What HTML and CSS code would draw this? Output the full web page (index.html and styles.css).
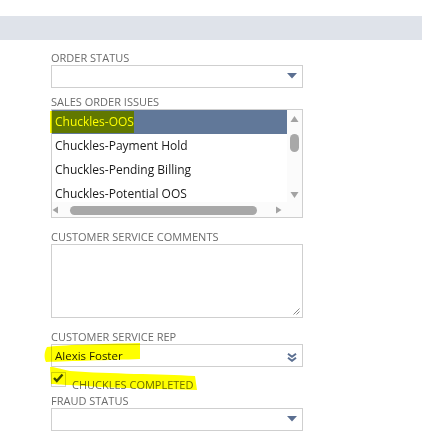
FILE: index.html
```html
<!doctype html>
<html lang="en">
  <head>
    <meta charset="UTF-8" />
    <meta name="viewport" content="width=device-width, initial-scale=1.0" />
    <title>Sales Order - Custom Fields</title>
    <link rel="stylesheet" href="styles.css">
  </head>
  <body>
    <div class="band"></div>

    <div class="form">
      <div class="field first">
        <div class="label">ORDER STATUS</div>
        <div class="select">
          <span class="value"></span>
          <svg class="arrow" width="10" height="6" viewBox="0 0 10 6">
            <path d="M0 0 L10 0 L5 5.5 Z" />
          </svg>
        </div>
      </div>

      <div class="field">
        <div class="label">SALES ORDER ISSUES</div>
        <div class="listbox">
          <div class="list-main">
            <div class="list-items">
              <div class="item selected">Chuckles-OOS</div>
              <div class="item">Chuckles-Payment Hold</div>
              <div class="item">Chuckles-Pending Billing</div>
              <div class="item">Chuckles-Potential OOS</div>
            </div>
            <!-- vertical scrollbar -->
            <svg class="vscroll" width="15" height="92" viewBox="0 0 15 92">
              <rect width="15" height="92" fill="#fbfbfb" />
              <path d="M3.5 12 L11.5 12 L7.5 6 Z" fill="#a3a3a3" />
              <rect x="3" y="24" width="9" height="18" rx="4.5" fill="#a8a8a8" />
              <path d="M3.5 82 L11.5 82 L7.5 88 Z" fill="#a3a3a3" />
            </svg>
          </div>
          <!-- horizontal scrollbar -->
          <div class="hscroll-row">
            <svg class="hscroll" width="235" height="15" viewBox="0 0 235 15">
              <rect width="235" height="15" fill="#fbfbfb" />
              <path d="M6 4.5 L6 11.5 L0.5 8 Z" fill="#a3a3a3" />
              <rect x="18" y="4" width="187" height="9" rx="4.5" fill="#a8a8a8" />
              <path d="M224 4.5 L224 11.5 L229.5 8 Z" fill="#a3a3a3" />
            </svg>
            <span class="corner"></span>
          </div>
        </div>
      </div>

      <div class="field spaced">
        <div class="label">CUSTOMER SERVICE COMMENTS</div>
        <div class="textarea">
          <svg class="grip" width="7" height="7" viewBox="0 0 7 7">
            <path d="M6.5 0.5 L0.5 6.5 M6.5 3.5 L3.5 6.5" stroke="#888" stroke-width="1" />
          </svg>
        </div>
      </div>

      <div class="field spaced">
        <div class="label">CUSTOMER SERVICE REP</div>
        <div class="select">
          <span class="value">Alexis Foster</span>
          <svg class="dbl" width="10" height="9" viewBox="0 0 10 9">
            <path d="M1 0.8 L5 3.8 L9 0.8 M1 4.8 L5 7.8 L9 4.8" fill="none" stroke="#5b6f91" stroke-width="2" />
          </svg>
        </div>
      </div>

      <label class="check-row">
        <span class="checkbox">
          <svg width="13" height="13" viewBox="0 0 13 13">
            <path d="M2 5 L4.8 8 L10.5 1.5" fill="none" stroke="#3f4a30" stroke-width="2.4" />
          </svg>
        </span>
        <span class="check-label">CHUCKLES COMPLETED</span>
      </label>

      <div class="field">
        <div class="label">FRAUD STATUS</div>
        <div class="select">
          <span class="value"></span>
          <svg class="arrow" width="10" height="6" viewBox="0 0 10 6">
            <path d="M0 0 L10 0 L5 5.5 Z" />
          </svg>
        </div>
      </div>
    </div>

    <!-- highlighter marks drawn over the form -->
    <svg class="marker" width="422" height="441" viewBox="0 0 422 441">
      <path d="M50 111 L134 111 L134 133 L50 133 Z" />
      <path d="M47 347 C60 345 100 344 140 343 L140 359 C110 360 70 361 46 362 C44 358 44 352 47 347 Z" />
      <path d="M50 367 C55 367 60 369 70 371 C110 374 160 374 195 376 L197 390 C160 389 110 388 70 385 C60 385 55 384 51 384 Z" />
    </svg>
  </body>
</html>
```

FILE: styles.css
```css
body {
  margin: 0;
  background: white;
  font-family: "Open Sans", "Liberation Sans", sans-serif;
  position: relative;
  width: 422px;
  height: 441px;
  overflow: hidden;
}

.band {
  margin-top: 16px;
  height: 24px;
  background: #dfe3ea;
}

.form {
  width: 252px;
  margin-left: 51px;
}

.field {
  margin-top: 6px;
}

.field.first {
  margin-top: 10px;
}

.field.spaced {
  margin-top: 11px;
}

.label {
  font-size: 11px;
  line-height: 15px;
  color: #6b6b6b;
}

.select {
  height: 21px;
  border: 1px solid #cfcfcf;
  display: flex;
  align-items: center;
  padding: 0 5px 0 3px;
}

.select .value {
  flex: 1;
  font-size: 11.5px;
  color: #1e1e1e;
}

.arrow {
  display: block;
  fill: #5b6f91;
  margin-top: -1px;
}

.dbl {
  display: block;
  margin-top: 3px;
}

.listbox {
  height: 107px;
  border: 1px solid #cfcfcf;
  display: flex;
  flex-direction: column;
}

.list-main {
  display: flex;
  height: 92px;
}

.list-items {
  flex: 1;
  overflow: hidden;
}

.vscroll,
.hscroll {
  display: block;
  flex: none;
}

.hscroll-row {
  display: flex;
  height: 15px;
}

.corner {
  flex: 1;
  background: #fbfbfb;
}

.item {
  height: 24px;
  line-height: 24px;
  padding-left: 3px;
  font-size: 12px;
  color: #1a1a1a;
  white-space: nowrap;
}

.item.selected {
  background: #617899;
  color: white;
}

.textarea {
  height: 70px;
  border: 1px solid #cfcfcf;
  display: flex;
  justify-content: flex-end;
  align-items: flex-end;
  padding: 0 2px 2px 0;
}

.check-row {
  display: flex;
  align-items: center;
  margin-top: 5px;
  height: 15px;
}

.checkbox {
  width: 13px;
  height: 13px;
  border: 1px solid #cfcfcf;
  display: flex;
}

.check-label {
  margin-left: 6px;
  margin-top: 9px;
  font-size: 11px;
  color: #6b6b6b;
}

.marker {
  position: absolute;
  left: 0;
  top: 0;
  mix-blend-mode: multiply;
  pointer-events: none;
}

.marker path {
  fill: #ffff00;
}
```
